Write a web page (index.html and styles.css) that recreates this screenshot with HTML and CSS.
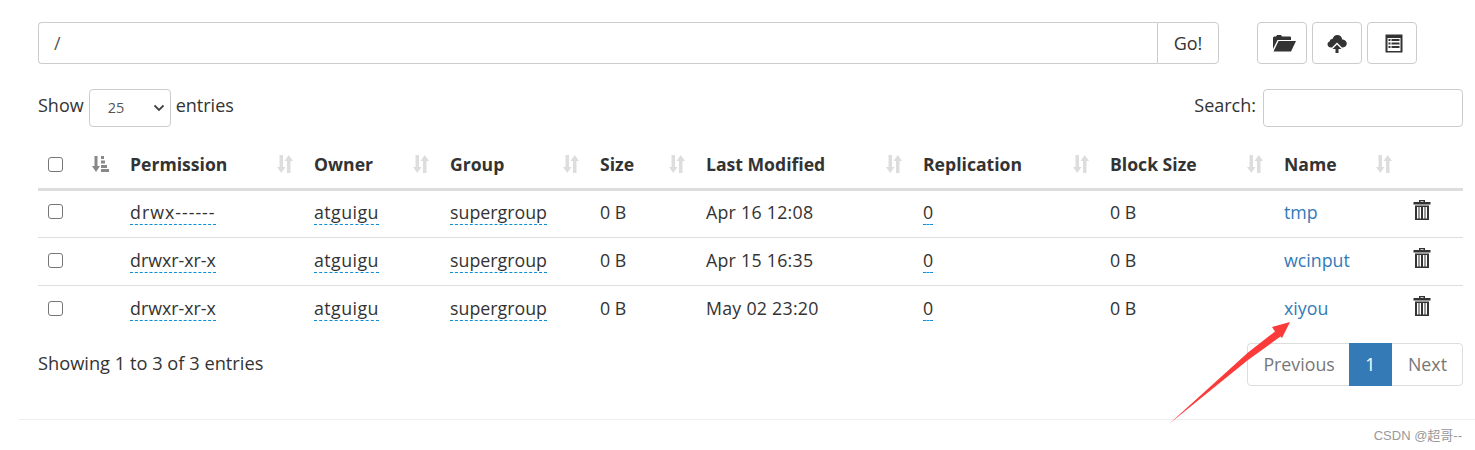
FILE: index.html
```html
<!DOCTYPE html>
<html lang="en">
<head>
<meta charset="utf-8">
<title>Browse Directory</title>
<link rel="stylesheet" href="styles.css">
</head>
<body>
<div class="page">
  <div class="toolbar">
    <div class="path-group">
      <div class="path-input">/</div>
      <button class="go">Go!</button>
    </div>
    <div class="actions">
      <button class="icon-btn"><svg class="ic-shift" width="24" height="18" viewBox="0 0 24 18"><path class="ic" d="M1 15V3.500L2 2.500H4L5 1H9L10 2.500H18.500L19 3.500V6H5.500L1 15ZM6.500 7H24L19 17.500H1.500Z"/></svg></button>
      <button class="icon-btn"><svg width="20" height="19" viewBox="0 0 20 19"><path class="ic" d="M4 13.500C1.800 13.500 .5 12 .5 10.300C.5 8.800 1.500 7.600 2.800 7.200C3 5.800 4.200 4.900 5.500 5.100C6.200 2.600 8 1 10.300 1C13 1 15 3 15.200 5.500C17.800 5.500 19.800 7.300 19.800 9.600C19.800 11.800 18.200 13.500 15.800 13.500H15L10 8.500L5 13.500ZM10 10.500L14.500 15H11.500V19H8.500V15H5.500Z"/></svg></button>
      <button class="icon-btn"><svg class="ic-shift" width="18" height="19" viewBox="0 0 18 19"><path class="ic" fill-rule="evenodd" d="M.5 .5H17.500V18.500H.5ZM2.500 4V17H15.500V4ZM3.500 5H5.500V7H3.500ZM6.500 5H14.500V7H6.500ZM3.500 8.500H5.500V10.500H3.500ZM6.500 8.500H14.500V10.500H6.500ZM3.500 12H5.500V14H3.500ZM6.500 12H14.500V14H6.500Z"/></svg></button>
    </div>
  </div>

  <div class="controls">
    <label class="show">Show <span class="select"><span>25</span><svg width="12" height="8" viewBox="0 0 12 8"><path d="M1.500 1.500L6 6L10.500 1.500" fill="none" stroke="#444" stroke-width="1.800"/></svg></span> entries</label>
    <label class="search">Search: <span class="search-box"></span></label>
  </div>

  <table class="files">
    <colgroup>
      <col class="c-check"><col class="c-sort"><col class="c-perm"><col class="c-owner"><col class="c-group"><col class="c-size"><col class="c-mod"><col class="c-rep"><col class="c-block"><col class="c-name"><col class="c-del">
    </colgroup>
    <thead>
      <tr>
        <th><span class="check"></span></th>
        <th><svg class="sort active" width="18" height="18" viewBox="0 0 18 18"><path d="M3.500 1H6.500V11H9L5 17L1 11H3.500ZM10 1H13V4H10ZM10 5.500H14V8.500H10ZM10 10H16V13H10ZM10 14H18V17H10Z"/></svg></th>
        <th><span class="th-in">Permission<svg class="sort" width="18" height="18" viewBox="0 0 18 18"><path d="M3.500 0H7V12H9.500L5.250 18L1 12H3.500ZM11 18V6H8.500L12.750 0L17 6H14.500V18Z"/></svg></span></th>
        <th><span class="th-in">Owner<svg class="sort" width="18" height="18" viewBox="0 0 18 18"><path d="M3.500 0H7V12H9.500L5.250 18L1 12H3.500ZM11 18V6H8.500L12.750 0L17 6H14.500V18Z"/></svg></span></th>
        <th><span class="th-in">Group<svg class="sort" width="18" height="18" viewBox="0 0 18 18"><path d="M3.500 0H7V12H9.500L5.250 18L1 12H3.500ZM11 18V6H8.500L12.750 0L17 6H14.500V18Z"/></svg></span></th>
        <th><span class="th-in">Size<svg class="sort" width="18" height="18" viewBox="0 0 18 18"><path d="M3.500 0H7V12H9.500L5.250 18L1 12H3.500ZM11 18V6H8.500L12.750 0L17 6H14.500V18Z"/></svg></span></th>
        <th><span class="th-in">Last Modified<svg class="sort" width="18" height="18" viewBox="0 0 18 18"><path d="M3.500 0H7V12H9.500L5.250 18L1 12H3.500ZM11 18V6H8.500L12.750 0L17 6H14.500V18Z"/></svg></span></th>
        <th><span class="th-in">Replication<svg class="sort" width="18" height="18" viewBox="0 0 18 18"><path d="M3.500 0H7V12H9.500L5.250 18L1 12H3.500ZM11 18V6H8.500L12.750 0L17 6H14.500V18Z"/></svg></span></th>
        <th><span class="th-in">Block Size<svg class="sort" width="18" height="18" viewBox="0 0 18 18"><path d="M3.500 0H7V12H9.500L5.250 18L1 12H3.500ZM11 18V6H8.500L12.750 0L17 6H14.500V18Z"/></svg></span></th>
        <th><span class="th-in name-th">Name<svg class="sort" width="18" height="18" viewBox="0 0 18 18"><path d="M3.500 0H7V12H9.500L5.250 18L1 12H3.500ZM11 18V6H8.500L12.750 0L17 6H14.500V18Z"/></svg></span></th>
        <th></th>
      </tr>
    </thead>
    <tbody>
      <tr>
        <td><span class="check"></span></td><td></td>
        <td><span class="dash perm">drwx------</span></td>
        <td><span class="dash owner">atguigu</span></td>
        <td><span class="dash">supergroup</span></td>
        <td>0 B</td><td class="date">Apr 16 12:08</td>
        <td><span class="dash">0</span></td>
        <td>0 B</td>
        <td><a class="link">tmp</a></td>
        <td><svg class="trash" width="18" height="22" viewBox="0 0 18 22"><path d="M6 3V1H12V3H17.500V5.500H.5V3ZM7.500 2.200V3H10.500V2.200ZM2 6.500H16V21H2ZM4 8V19.500H5.500V8ZM6.500 8V19.500H8V8ZM10 8V19.500H11.500V8ZM12.500 8V19.500H14V8Z" fill-rule="evenodd"/></svg></td>
      </tr>
      <tr>
        <td><span class="check"></span></td><td></td>
        <td><span class="dash">drwxr-xr-x</span></td>
        <td><span class="dash owner">atguigu</span></td>
        <td><span class="dash">supergroup</span></td>
        <td>0 B</td><td class="date">Apr 15 16:35</td>
        <td><span class="dash">0</span></td>
        <td>0 B</td>
        <td><a class="link">wcinput</a></td>
        <td><svg class="trash" width="18" height="22" viewBox="0 0 18 22"><path d="M6 3V1H12V3H17.500V5.500H.5V3ZM7.500 2.200V3H10.500V2.200ZM2 6.500H16V21H2ZM4 8V19.500H5.500V8ZM6.500 8V19.500H8V8ZM10 8V19.500H11.500V8ZM12.500 8V19.500H14V8Z" fill-rule="evenodd"/></svg></td>
      </tr>
      <tr>
        <td><span class="check"></span></td><td></td>
        <td><span class="dash">drwxr-xr-x</span></td>
        <td><span class="dash owner">atguigu</span></td>
        <td><span class="dash">supergroup</span></td>
        <td>0 B</td><td class="date">May 02 23:20</td>
        <td><span class="dash">0</span></td>
        <td>0 B</td>
        <td><a class="link">xiyou</a></td>
        <td><svg class="trash" width="18" height="22" viewBox="0 0 18 22"><path d="M6 3V1H12V3H17.500V5.500H.5V3ZM7.500 2.200V3H10.500V2.200ZM2 6.500H16V21H2ZM4 8V19.500H5.500V8ZM6.500 8V19.500H8V8ZM10 8V19.500H11.500V8ZM12.500 8V19.500H14V8Z" fill-rule="evenodd"/></svg></td>
      </tr>
    </tbody>
  </table>

  <div class="table-foot">
    <div class="info">Showing 1 to 3 of 3 entries</div>
    <div class="pager"><span class="pg prev">Previous</span><span class="pg current">1</span><span class="pg next">Next</span></div>
  </div>
</div>
<div class="rule"></div>
<svg class="arrow" width="130" height="110" viewBox="0 0 130 110"><path d="M1 106L80 34.500L107 13.500L104 9L122 4L114 20L112.500 18.500L80 42Z" fill="#fb3a3a"/></svg>
<div class="mark">CSDN @超哥--</div>
</body>
</html>
```

FILE: styles.css
```css
* { box-sizing: border-box; }
html, body { margin: 0; height: 450px; overflow: hidden; }
body {
  background: #fff;
  color: #333;
  font-family: "Open Sans", "Noto Sans CJK SC", sans-serif;
  font-size: 18px;
  position: relative;
}
.page { padding: 22px 12px 0 38px; }
button { font: inherit; color: inherit; background: #fff; }

.toolbar { display: flex; height: 42px; }
.path-group { display: flex; width: 1181px; }
.path-input {
  flex: 1;
  border: 1px solid #ccc;
  border-right: 0;
  border-radius: 4px 0 0 4px;
  padding: 0 15px;
  line-height: 40px;
  font-size: 18px;
  color: #555;
}
.go {
  width: 62px;
  border: 1px solid #ccc;
  border-radius: 0 4px 4px 0;
  padding: 0;
}
.actions { display: flex; gap: 5px; margin-left: 38px; }
.icon-btn {
  width: 50px;
  height: 42px;
  border: 1px solid #ccc;
  border-radius: 4px;
  padding: 0;
  display: flex;
  align-items: center;
  justify-content: center;
}
.ic { fill: #333; }
.ic-shift { margin-left: 3px; }

.controls {
  display: flex;
  justify-content: space-between;
  margin-top: 25px;
  height: 38px;
}
.show, .search { display: flex; align-items: flex-start; line-height: 32px; }
.select {
  width: 82px;
  height: 38px;
  margin: 0 5px;
  border: 1px solid #ccc;
  border-radius: 4px;
  display: flex;
  align-items: center;
  justify-content: space-between;
  padding: 0 5px 0 18px;
  font-size: 14.500px;
  color: #555;
  line-height: 38px;
}
.search-box {
  width: 200px;
  height: 38px;
  margin-left: 7px;
  border: 1px solid #ccc;
  border-radius: 4px;
}

.files { width: 1425px; table-layout: fixed; border-collapse: collapse; margin-top: 12px; }
.c-check { width: 53px; } .c-sort { width: 39px; } .c-perm { width: 184px; }
.c-owner { width: 136px; } .c-group { width: 150px; } .c-size { width: 106px; }
.c-mod { width: 217px; } .c-rep { width: 187px; } .c-block { width: 174px; }
.c-name { width: 121px; } .c-del { width: 58px; }
.files th, .files td { padding: 0; text-align: left; vertical-align: middle; }
.files thead tr { height: 50px; border-bottom: 3px solid #ddd; }
.files th { font-weight: 700; font-size: 17.600px; padding-top: 2px; }
.files td { font-size: 17.800px; padding-bottom: 2px; }
.files tbody tr { height: 48px; }
.files tbody tr + tr { border-top: 1px solid #ddd; }
.files tbody tr:first-child td { padding-bottom: 4px; }
.files td:first-child, .files th:first-child { padding-left: 10px; }
.th-in { display: flex; justify-content: space-between; align-items: center; padding-right: 20px; }
.name-th { padding-right: 12px; }
.check {
  display: block;
  width: 15px;
  height: 15px;
  border: 1px solid #767676;
  border-radius: 3px;
}
.sort { fill: #ddd; display: block; }
.sort.active { fill: #888; }
.dash { border-bottom: 1px dashed #0a8fd8; }
.perm { letter-spacing: 1px; }
.owner { letter-spacing: .45px; }
.date { letter-spacing: .25px; }
.link { color: #337ab7; }
.trash { fill: #333; display: block; margin: -2px 0 2px 8px; }

.table-foot { display: flex; justify-content: space-between; margin-top: 10px; }
.info { line-height: 40px; font-size: 18.250px; }
.pager {
  display: flex;
  height: 43px;
  border: 1px solid #ddd;
  border-radius: 4px;
  color: #777;
  font-size: 17.800px;
}
.pg { line-height: 41px; }
.prev { padding: 0 14px 0 15px; }
.next { padding: 0 15px 0 16px; }
.current {
  background: #337ab7;
  color: #fff;
  margin: -1px 0;
  padding: 0 16.500px;
  line-height: 43px;
  height: 43px;
}

.rule { position: absolute; left: 19px; right: 0; top: 419px; border-top: 1px solid #eee; }
.arrow { position: absolute; left: 1168px; top: 318px; }
.mark {
  position: absolute;
  right: 13px;
  top: 425px;
  font-family: "Liberation Sans", "Noto Sans CJK SC", sans-serif;
  font-size: 13px;
  color: #999;
}
```
